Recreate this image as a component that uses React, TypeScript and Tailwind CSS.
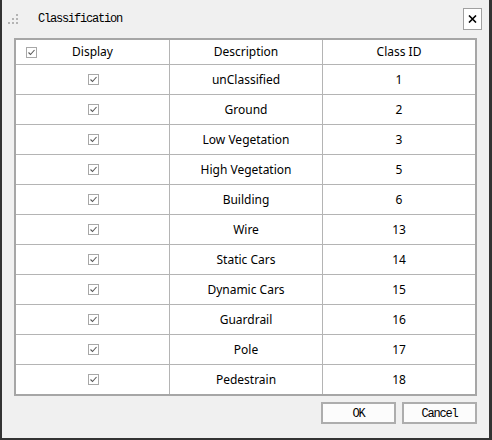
import React from 'react';

interface ClassRow {
  name: string;
  id: number;
}

const ROWS: ClassRow[] = [
  { name: 'unClassified', id: 1 },
  { name: 'Ground', id: 2 },
  { name: 'Low Vegetation', id: 3 },
  { name: 'High Vegetation', id: 5 },
  { name: 'Building', id: 6 },
  { name: 'Wire', id: 13 },
  { name: 'Static Cars', id: 14 },
  { name: 'Dynamic Cars', id: 15 },
  { name: 'Guardrail', id: 16 },
  { name: 'Pole', id: 17 },
  { name: 'Pedestrain', id: 18 },
];

const mono = { fontFamily: '"Liberation Mono", "DejaVu Sans Mono", monospace' };

// small grey checkbox, always ticked
const Check = () => (
  <span className="w-[11px] h-[11px] border border-[#a8a8a8] bg-white flex items-center justify-center">
    <svg width="9" height="9" viewBox="0 0 9 9">
      <polyline points="1.5,4.5 3.5,6.5 7.5,2" fill="none" stroke="#5a5a5a" strokeWidth="1.1" />
    </svg>
  </span>
);

const Grip = () => (
  <svg width="10" height="10" viewBox="0 0 10 10">
    <rect x="8" y="0" width="2" height="2" fill="#b4b4b4" />
    <rect x="4" y="4" width="2" height="2" fill="#b4b4b4" />
    <rect x="8" y="4" width="2" height="2" fill="#b4b4b4" />
    <rect x="0" y="8" width="2" height="2" fill="#b4b4b4" />
    <rect x="4" y="8" width="2" height="2" fill="#b4b4b4" />
    <rect x="8" y="8" width="2" height="2" fill="#b4b4b4" />
  </svg>
);

export default function App() {
  return (
    <div
      className="w-[492px] h-[440px] bg-[#f0f0f0] border-l-2 border-r-[3px] border-b-2 border-[#333] flex flex-col text-black"
      style={{ fontFamily: '"Noto Sans", "Noto Sans CJK SC", sans-serif' }}
    >
      {/* title bar */}
      <div className="h-[38px] flex items-center pl-[6px] pr-[7px] shrink-0">
        <Grip />
        <span className="ml-[20px] text-[12px] tracking-[-1.2px] font-light text-black" style={mono}>
          Classification
        </span>
        <button className="ml-auto w-[19px] h-[22px] border border-[#a0a0a0] bg-white flex items-center justify-center">
          <svg width="9" height="8" viewBox="0 0 9 8">
            <path d="M1 0.5 L8 7.5 M8 0.5 L1 7.5" stroke="#000" strokeWidth="1.6" />
          </svg>
        </button>
      </div>

      {/* table */}
      <div className="mx-[12px] border-2 border-[#a6a6a6] bg-white text-[12px] leading-none">
        <div className="flex h-[25px] border-b border-[#b4b4b4]">
          <div className="w-[154px] border-r border-[#b4b4b4] flex items-center pl-[10px]">
            <Check />
            <span className="flex-1 text-center">Display</span>
            <span className="w-[21px]" />
          </div>
          <div className="w-[153px] border-r border-[#b4b4b4] flex items-center justify-center">Description</div>
          <div className="flex-1 flex items-center justify-center">Class ID</div>
        </div>
        {ROWS.map((row, i) => (
          <div
            key={row.id}
            className={
              i === ROWS.length - 1
                ? 'flex h-[29px]'
                : 'flex h-[30px] border-b border-[#b4b4b4]'
            }
          >
            <div className="w-[154px] border-r border-[#b4b4b4] flex items-center justify-center pl-[1px]">
              <Check />
            </div>
            <div className="w-[153px] border-r border-[#b4b4b4] flex items-center justify-center">{row.name}</div>
            <div className="flex-1 flex items-center justify-center">{row.id}</div>
          </div>
        ))}
      </div>

      {/* buttons */}
      <div className="mt-[6px] mr-[12px] flex justify-end gap-[6px]">
        <button
          className="w-[75px] h-[22px] border-2 border-[#adadad] bg-[#fcfcfc] text-[12px] tracking-[-1.2px] flex items-center justify-center pt-[1px]"
          style={mono}
        >
          OK
        </button>
        <button
          className="w-[75px] h-[22px] border-2 border-[#adadad] bg-[#fcfcfc] text-[12px] tracking-[-1.2px] flex items-center justify-center pt-[1px]"
          style={mono}
        >
          Cancel
        </button>
      </div>
    </div>
  );
}
